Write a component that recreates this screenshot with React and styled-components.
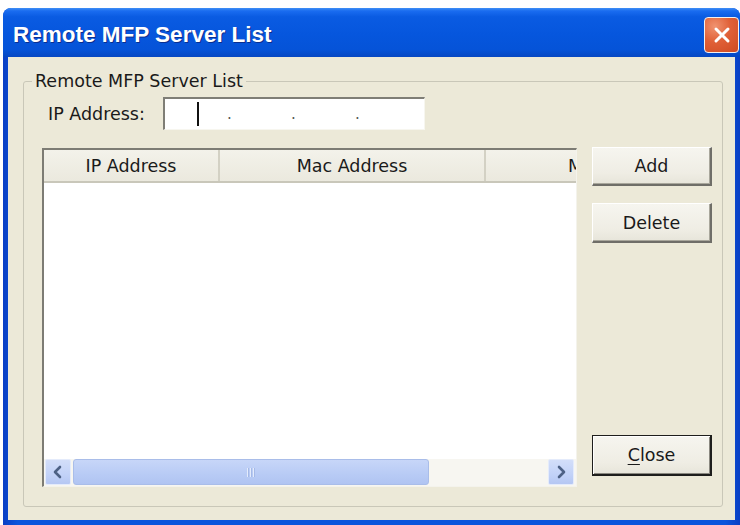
import React from "react";
import styled, { createGlobalStyle } from "styled-components";

const GlobalStyle = createGlobalStyle`
  html, body {
    margin: 0;
    padding: 0;
    background: #ffffff;
  }
  body {
    font-family: "DejaVu Sans", "Liberation Sans", sans-serif;
    font-size: 17.5px;
    color: #1a1a1a;
  }
`;

const Window = styled.div`
  margin: 8px 0 0 3px;
  width: 737px;
  height: 517px;
  display: flex;
  flex-direction: column;
  border-radius: 8px 8px 0 0;
  overflow: hidden;
  background: linear-gradient(to right, #0a3fc4 0%, #0a55dc 2%, #0a55dc 98%, #0a3fc4 100%);
`;

const TitleBar = styled.div`
  height: 49px;
  flex: none;
  display: flex;
  align-items: center;
  justify-content: space-between;
  padding: 0 1px 0 10px;
  background: linear-gradient(
    to bottom,
    #3f8ef5 0%,
    #1a6cf0 6%,
    #0a5be2 18%,
    #0656dd 55%,
    #0553d8 85%,
    #0647c2 100%
  );
`;

const Title = styled.span`
  font-family: "Liberation Sans", Arial, sans-serif;
  font-weight: bold;
  font-size: 22.5px;
  color: #ffffff;
  padding-top: 4px;
  text-shadow: 1px 1px 0 #0b2f8f;
`;

const CloseBox = styled.div`
  width: 33px;
  height: 34px;
  margin-top: 5px;
  border: 1.5px solid #f4f0ee;
  border-radius: 4px;
  display: flex;
  align-items: center;
  justify-content: center;
  background: radial-gradient(circle at 30% 25%, #f09370 0%, #e06037 45%, #cf4a22 100%);
`;

const Frame = styled.div`
  flex: 1;
  margin: 0 5px 5px 5px;
  background: #ece9d8;
  padding: 15px 12px 13px 15px;
  display: flex;
  min-height: 0;
`;

const GroupBox = styled.fieldset`
  flex: 1;
  margin: 0;
  min-width: 0;
  border: 1px solid #c9c7b8;
  border-radius: 3px;
  padding: 7px 10px 19px 18px;
  display: flex;
  flex-direction: column;
`;

const Legend = styled.legend`
  margin-left: -10px;
  padding: 0 3px;
  line-height: 18px;
`;

const FieldRow = styled.div`
  display: flex;
  align-items: center;
  gap: 14px;
  padding-left: 6px;
`;

const Label = styled.span`
  width: 101px;
  white-space: nowrap;
`;

const IpField = styled.div`
  width: 262px;
  height: 33px;
  box-sizing: border-box;
  background: #ffffff;
  border-top: 2px solid #7f7e76;
  border-left: 2px solid #7f7e76;
  border-right: 1px solid #f7f6ef;
  border-bottom: 1px solid #f7f6ef;
  display: flex;
  align-items: center;
  padding-left: 2px;
`;

const Octet = styled.span`
  width: 61px;
  height: 100%;
  display: flex;
  align-items: center;
  justify-content: center;
`;

const Caret = styled.span`
  width: 2px;
  height: 24px;
  background: #111;
`;

const Dot = styled.span`
  width: 3px;
  font-size: 15px;
  color: #555;
  line-height: 1;
  display: flex;
  justify-content: center;
`;

const MainRow = styled.div`
  flex: 1;
  display: flex;
  gap: 15px;
  margin-top: 18px;
  min-height: 0;
`;

const ListView = styled.div`
  flex: 1;
  min-width: 0;
  display: flex;
  flex-direction: column;
  background: #ffffff;
  border-top: 2px solid #7d7c74;
  border-left: 2px solid #7d7c74;
  border-right: 1px solid #f4f3ec;
  border-bottom: 1px solid #f4f3ec;
  overflow: hidden;
`;

const HeaderRow = styled.div`
  height: 31px;
  flex: none;
  display: flex;
  background: linear-gradient(to bottom, #f3f2ea 0%, #ebe9de 100%);
  border-bottom: 2px solid #c9c7ba;
  overflow: hidden;
`;

const HeaderCell = styled.div`
  flex: ${(p) => (p.$last ? "1" : "none")};
  width: ${(p) => (p.$last ? "auto" : `${p.$w}px`)};
  min-width: 0;
  overflow: hidden;
  display: flex;
  align-items: center;
  justify-content: ${(p) => (p.$pad ? "flex-start" : "center")};
  padding-left: ${(p) => p.$pad || 0}px;
  box-sizing: border-box;
  white-space: nowrap;
  border-right: ${(p) => (p.$last ? "none" : "2px solid #d3d1c4")};
`;

const Rows = styled.div`
  flex: 1;
`;

const ScrollBar = styled.div`
  height: 26px;
  flex: none;
  display: flex;
  align-items: stretch;
  gap: 2px;
  padding: 0 2px 1px 1px;
  background: #f7f6f1;
`;

const ArrowButton = styled.div`
  width: 26px;
  flex: none;
  border-radius: 2px;
  background: linear-gradient(to bottom, #d3def9 0%, #c2d2f8 60%, #b5c7f3 100%);
  border: 1px solid #e4ebfb;
  box-sizing: border-box;
  display: flex;
  align-items: center;
  justify-content: center;
`;

const Thumb = styled.div`
  width: 356px;
  flex: none;
  border-radius: 3px;
  background: linear-gradient(to bottom, #c7d6f8 0%, #b8cbf5 60%, #b0c4f2 100%);
  border: 1px solid #a9bde9;
  box-sizing: border-box;
  display: flex;
  align-items: center;
  justify-content: center;
`;

const Grip = styled.span`
  width: 9px;
  height: 9px;
  background: repeating-linear-gradient(
    to right,
    #eef3fd 0px,
    #eef3fd 1px,
    #9fb4e3 1px,
    #9fb4e3 2px,
    transparent 2px,
    transparent 3px
  );
  opacity: 0.8;
`;

const Track = styled.div`
  flex: 1;
`;

const ButtonColumn = styled.div`
  width: 120px;
  flex: none;
  display: flex;
  flex-direction: column;
  gap: 17px;
  padding-bottom: 11px;
  margin-top: -1px;
`;

const PushButton = styled.div`
  height: ${(p) => p.$h || 39}px;
  box-sizing: border-box;
  display: flex;
  align-items: center;
  justify-content: center;
  background: linear-gradient(to bottom, #f6f5ef 0%, #efede4 70%, #e7e5da 100%);
  margin-top: ${(p) => (p.$push ? "auto" : "0")};
  ${(p) =>
    p.$default
      ? `
    border: 1px solid #1e1e1c;
    border-right-width: 2px;
    border-bottom-width: 2px;
    box-shadow: inset 1px 1px 0 #ffffff, inset -1px -1px 0 #8a8880;
  `
      : `
    border-top: 1px solid #ffffff;
    border-left: 1px solid #ffffff;
    border-right: 2px solid #6f6e68;
    border-bottom: 2px solid #6f6e68;
    box-shadow: inset -1px -1px 0 #a9a79c;
  `}
`;

const AccessKey = styled.span`
  text-decoration: underline;
  text-underline-offset: 3px;
`;

function Chevron({ dir }) {
  const d = dir === "left" ? "M10 3 L5 8 L10 13" : "M6 3 L11 8 L6 13";
  return (
    <svg width="16" height="16" viewBox="0 0 16 16">
      <path d={d} fill="none" stroke="#4d6185" strokeWidth="2.6" strokeLinecap="round" strokeLinejoin="round" />
    </svg>
  );
}

function CloseGlyph() {
  return (
    <svg width="20" height="20" viewBox="0 0 20 20">
      <path d="M4 4 L16 16 M16 4 L4 16" stroke="#ffffff" strokeWidth="3" strokeLinecap="round" />
    </svg>
  );
}

const columns = [
  { key: "ip", label: "IP Address", width: 176 },
  { key: "mac", label: "Mac Address", width: 266 },
  { key: "name", label: "M", pad: 82, last: true },
];

export default function App() {
  return (
    <>
      <GlobalStyle />
      <Window>
        <TitleBar>
          <Title>Remote MFP Server List</Title>
          <CloseBox>
            <CloseGlyph />
          </CloseBox>
        </TitleBar>
        <Frame>
          <GroupBox>
            <Legend>Remote MFP Server List</Legend>
            <FieldRow>
              <Label>IP Address:</Label>
              <IpField>
                <Octet>
                  <Caret />
                </Octet>
                <Dot>.</Dot>
                <Octet />
                <Dot>.</Dot>
                <Octet />
                <Dot>.</Dot>
                <Octet />
              </IpField>
            </FieldRow>
            <MainRow>
              <ListView>
                <HeaderRow>
                  {columns.map((c) => (
                    <HeaderCell key={c.key} $w={c.width} $pad={c.pad} $last={c.last}>
                      {c.label}
                    </HeaderCell>
                  ))}
                </HeaderRow>
                <Rows />
                <ScrollBar>
                  <ArrowButton>
                    <Chevron dir="left" />
                  </ArrowButton>
                  <Thumb>
                    <Grip />
                  </Thumb>
                  <Track />
                  <ArrowButton>
                    <Chevron dir="right" />
                  </ArrowButton>
                </ScrollBar>
              </ListView>
              <ButtonColumn>
                <PushButton>Add</PushButton>
                <PushButton $h={40}>Delete</PushButton>
                <PushButton $push $default $h={41}>
                  <span>
                    <AccessKey>C</AccessKey>lose
                  </span>
                </PushButton>
              </ButtonColumn>
            </MainRow>
          </GroupBox>
        </Frame>
      </Window>
    </>
  );
}
